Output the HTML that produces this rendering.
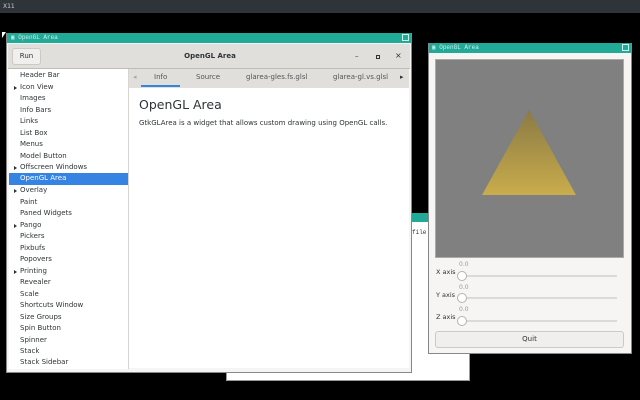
<html><head><style>
*{margin:0;padding:0;box-sizing:border-box}
body{width:640px;height:400px;background:#000;position:relative;overflow:hidden;font-family:"DejaVu Sans","Liberation Sans",sans-serif;font-size:7px;color:#2e3436}
.a{position:absolute}
.row{position:absolute;left:11px;width:117px;height:11.5px;line-height:11.5px;padding-left:9px}
.tri{position:absolute;left:3px;top:4px;border-left:3px solid #2e3436;border-top:2px solid transparent;border-bottom:2px solid transparent}
.ttl{font-family:"Liberation Mono",monospace;font-size:6px;color:#cfeee8;line-height:10px}
.sl{position:absolute;left:462px;width:155px;height:2px;background:#dcdad5}
.kn{position:absolute;left:457px;width:10px;height:10px;border-radius:50%;background:#fff;border:1px solid #b6b3ad}
.val{position:absolute;left:459px;color:#999;font-size:6px}
.lab{position:absolute;left:436px;font-size:6.5px}
</style></head><body>
<div class="a" style="left:0;top:0;width:640px;height:13px;background:#2f343b;color:#ccc;font-size:6px;line-height:13px;padding-left:3px">X11</div>

<div class="a" style="left:226px;top:213px;width:244px;height:168px;background:#fff;border:1px solid #999"></div>
<div class="a" style="left:410px;top:213px;width:18px;height:9px;background:#22aa98"></div>
<div class="a" style="left:412px;top:229px;font-family:'Liberation Mono',monospace;font-size:6px">file</div>

<div class="a" style="left:6px;top:33px;width:406px;height:340px;background:#f6f5f4;border:1px solid #888"></div>
<div class="a ttl" style="left:7px;top:33px;width:404px;height:10px;background:#22aa98;padding-left:4px">▣ OpenGL Area</div>
<div class="a" style="left:402px;top:34px;width:7px;height:7px;border:1px solid #cfeee8"></div>
<div class="a" style="left:8px;top:44px;width:402px;height:25px;background:#e1dfdb;border-bottom:1px solid #c0bdb7"></div>
<div class="a" style="left:12px;top:48px;width:29px;height:17px;background:#f0efed;border:1px solid #cdc9c3;border-radius:3px;text-align:center;line-height:15px">Run</div>
<div class="a" style="left:160px;top:52px;width:100px;text-align:center;font-weight:bold">OpenGL Area</div>
<div class="a" style="left:355px;top:52px">–</div>
<div class="a" style="left:376px;top:55px;width:4px;height:4px;border:1px solid #2e3436"></div>
<div class="a" style="left:395px;top:51px;font-size:8px">×</div>

<div class="a" style="left:9px;top:69px;width:120px;height:300px;background:#fff;border-right:1px solid #d8d5d0"></div>
<div class="a" style="left:129px;top:69px;width:280px;height:19px;background:#e1dfdb"></div>
<div class="a" style="left:133px;top:73px;color:#aaa">◂</div>
<div class="a" style="left:154px;top:73px;color:#555">Info</div>
<div class="a" style="left:141px;top:85px;width:39px;height:2px;background:#3584e4"></div>
<div class="a" style="left:196px;top:73px;color:#555">Source</div>
<div class="a" style="left:246px;top:73px;color:#555">glarea-gles.fs.glsl</div>
<div class="a" style="left:333px;top:73px;color:#555">glarea-gl.vs.glsl</div>
<div class="a" style="left:400px;top:73px">▸</div>
<div class="a" style="left:129px;top:88px;width:280px;height:280px;background:#fff"></div>
<div class="a" style="left:139px;top:97px;font-size:12.5px">OpenGL Area</div>
<div class="a" style="left:139px;top:119px">GtkGLArea is a widget that allows custom drawing using OpenGL calls.</div>

<div class="a" style="left:9px;top:173px;width:119px;height:11.5px;background:#3584e4"></div>
<div class="row" style="top:70px">Header Bar</div>
<div class="row" style="top:81.5px"><i class="tri"></i>Icon View</div>
<div class="row" style="top:93px">Images</div>
<div class="row" style="top:104.5px">Info Bars</div>
<div class="row" style="top:116px">Links</div>
<div class="row" style="top:127.5px">List Box</div>
<div class="row" style="top:139px">Menus</div>
<div class="row" style="top:150.5px">Model Button</div>
<div class="row" style="top:162px"><i class="tri"></i>Offscreen Windows</div>
<div class="row" style="top:173px;color:#fff">OpenGL Area</div>
<div class="row" style="top:185px"><i class="tri"></i>Overlay</div>
<div class="row" style="top:196.5px">Paint</div>
<div class="row" style="top:208px">Paned Widgets</div>
<div class="row" style="top:219.5px"><i class="tri"></i>Pango</div>
<div class="row" style="top:231px">Pickers</div>
<div class="row" style="top:242.5px">Pixbufs</div>
<div class="row" style="top:254px">Popovers</div>
<div class="row" style="top:265.5px"><i class="tri"></i>Printing</div>
<div class="row" style="top:277px">Revealer</div>
<div class="row" style="top:288.5px">Scale</div>
<div class="row" style="top:300px">Shortcuts Window</div>
<div class="row" style="top:311.5px">Size Groups</div>
<div class="row" style="top:323px">Spin Button</div>
<div class="row" style="top:334.5px">Spinner</div>
<div class="row" style="top:346px">Stack</div>
<div class="row" style="top:357px">Stack Sidebar</div>

<div class="a" style="left:428px;top:43px;width:204px;height:311px;background:#f6f5f4;border:1px solid #888"></div>
<div class="a ttl" style="left:429px;top:43px;width:202px;height:10px;background:#22aa98;padding-left:3px">▣ OpenGL Area</div>
<div class="a" style="left:622px;top:44px;width:7px;height:7px;border:1px solid #cfeee8"></div>
<div class="a" style="left:435px;top:59px;width:189px;height:199px;background:#808080;border:1px solid #aaa"></div>
<svg class="a" style="left:0;top:0" width="640" height="400"><defs><linearGradient id="g" x1="0" y1="0" x2="0" y2="1"><stop offset="0" stop-color="#8a7a45"/><stop offset="1" stop-color="#c9ac4c"/></linearGradient></defs><polygon points="529,110 482,195 576,195" fill="url(#g)"/></svg>
<div class="val" style="top:261px">0.0</div><div class="lab" style="top:268px">X axis</div><div class="sl" style="top:275px"></div><div class="kn" style="top:271px"></div>
<div class="val" style="top:284px">0.0</div><div class="lab" style="top:291px">Y axis</div><div class="sl" style="top:297px"></div><div class="kn" style="top:293px"></div>
<div class="val" style="top:306px">0.0</div><div class="lab" style="top:313px">Z axis</div><div class="sl" style="top:320px"></div><div class="kn" style="top:316px"></div>
<div class="a" style="left:435px;top:331px;width:189px;height:17px;background:#f0efed;border:1px solid #cdc9c3;border-radius:3px;text-align:center;line-height:15px">Quit</div>
<div class="a" style="left:2px;top:32px;width:0;height:0;border-left:4px solid #fff;border-bottom:6px solid transparent"></div>
</body></html>
